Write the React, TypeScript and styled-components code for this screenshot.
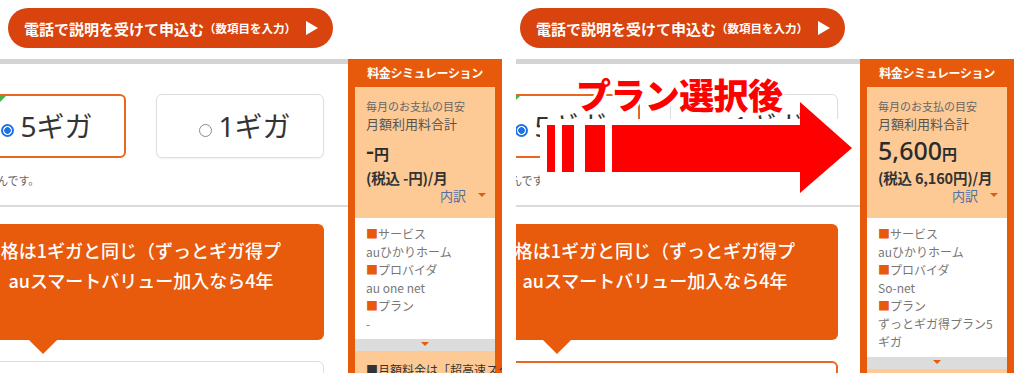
import React from 'react';
import styled, { createGlobalStyle } from 'styled-components';

const GlobalStyle = createGlobalStyle`
  body {
    margin: 0;
    background: #fff;
    font-family: "Noto Sans CJK JP", "Noto Sans", sans-serif;
  }
`;

const ORANGE = '#e75a0b';
const PEACH = '#fdca96';

const Page = styled.div`
  display: flex;
  width: 1024px;
  height: 373px;
  overflow: hidden;
`;

const Panel = styled.section`
  position: relative;
  width: 512px;
  height: 373px;
  flex: none;
  overflow: hidden;
`;

const TopRow = styled.div`
  height: 59px;
  padding: 8px 0 0 8px;
  box-sizing: border-box;
`;

const CallButton = styled.a`
  display: inline-flex;
  align-items: center;
  width: 325px;
  height: 40px;
  box-sizing: border-box;
  padding-left: 16px;
  border-radius: 20px;
  background: #d8430e;
  color: #fff;
  text-decoration: none;
  font-size: 15px;
  font-weight: 700;
  white-space: nowrap;
`;

const CallNote = styled.span`
  font-size: 11.5px;
  font-weight: 700;
`;

const PlayIcon = styled.svg`
  margin-left: 10px;
`;

const Body = styled.div`
  display: flex;
`;

const Main = styled.div<{ $clip: number }>`
  width: 348px;
  flex: none;
  overflow: hidden;
  clip-path: inset(0 0 0 ${(p) => p.$clip}px);
`;

// the page is scrolled sideways in the screenshot, so the column starts off-screen
const MainInner = styled.div<{ $shift: number }>`
  width: 390px;
  margin-left: ${(p) => p.$shift - 42}px;
`;

const GreyBar = styled.div`
  height: 5px;
  background: #d4d4d4;
`;

const Content = styled.div`
  padding-right: 24px;
`;

const OptionRow = styled.div`
  display: grid;
  grid-template-columns: 168px 168px;
  column-gap: 30px;
  margin-top: 30px;
`;

const OptionCard = styled.div<{ $selected: boolean }>`
  position: relative;
  height: 64px;
  box-sizing: border-box;
  padding-left: 10px;
  border-radius: 6px;
  border: ${(p) => (p.$selected ? `2px solid #e8661f` : '1px solid #dedede')};
  box-shadow: ${(p) => (p.$selected ? 'none' : '0 1px 2px rgba(0,0,0,0.06)')};
  display: flex;
  align-items: center;
  justify-content: center;
  overflow: hidden;

  &::before {
    content: '';
    display: ${(p) => (p.$selected ? 'block' : 'none')};
    position: absolute;
    top: 0;
    left: 0;
    border-top: 46px solid #46b34a;
    border-right: 46px solid transparent;
  }
`;

const Radio = styled.span<{ $checked: boolean }>`
  width: 13px;
  height: 13px;
  box-sizing: border-box;
  border-radius: 50%;
  flex: none;
  margin: 8px 6px 0 0;
  border: ${(p) => (p.$checked ? '2px solid #1a73e8' : '1px solid #8a8a8a')};
  background: ${(p) =>
    p.$checked ? 'radial-gradient(circle, #1a73e8 0 3px, #fff 3.6px)' : '#fff'};
`;

const OptionLabel = styled.span`
  font-family: "Noto Sans", "Noto Sans CJK JP", sans-serif;
  font-size: 28px;
  line-height: 1;
  color: #333;
`;

const Note = styled.div`
  margin-top: 14px;
  padding-left: 6px;
  font-size: 11px;
  line-height: 16px;
  color: #666;
`;

const Divider = styled.div`
  margin-top: 17px;
  height: 2px;
  background: #dadada;
`;

const Callout = styled.div`
  position: relative;
  margin-top: 17px;
  height: 116px;
  box-sizing: border-box;
  padding-top: 11px;
  border-radius: 6px;
  background: #e85a0c;
  color: #fff;
  text-align: center;
  font-size: 18px;
  font-weight: 500;
  line-height: 30px;
  white-space: nowrap;

  &::after {
    content: '';
    position: absolute;
    left: 71px;
    top: 100%;
    border-left: 14px solid transparent;
    border-right: 14px solid transparent;
    border-top: 14px solid #e85a0c;
  }
`;

const NextCard = styled.div<{ $selected: boolean }>`
  margin-top: 21px;
  height: 40px;
  border-radius: 6px;
  border: ${(p) => (p.$selected ? '2px solid #e8661f' : '1px solid #dedede')};
`;

const Sidebar = styled.aside`
  width: 154px;
  height: 314px;
  flex: none;
  box-sizing: border-box;
  padding: 0 7px;
  background: ${ORANGE};
  overflow: hidden;
`;

const SideTitle = styled.div`
  height: 28px;
  line-height: 28px;
  text-align: center;
  color: #fff;
  font-size: 12px;
  font-weight: 700;
  letter-spacing: -0.4px;
`;

const Summary = styled.div`
  background: ${PEACH};
  padding: 11px 9px 14px 11px;
  color: #444;
`;

const SmallLine = styled.div`
  font-size: 11px;
  line-height: 17px;
  color: #666;
`;

const TotalLabel = styled.div`
  font-size: 13px;
  line-height: 18px;
  color: #555;
`;

const PriceRow = styled.div`
  margin-top: 2px;
  height: 30px;
  line-height: 30px;
  font-family: "Noto Sans", "Noto Sans CJK JP", sans-serif;
  font-size: 25px;
  font-weight: 500;
  color: #2b2b2b;
`;

const Yen = styled.span`
  font-family: "Noto Sans CJK JP", sans-serif;
  font-size: 15px;
  font-weight: 700;
`;

const TaxLine = styled.div`
  margin-top: 3px;
  font-size: 14.5px;
  font-weight: 700;
  line-height: 20px;
  letter-spacing: -0.2px;
  color: #333;
  white-space: nowrap;
`;

const DetailToggle = styled.div`
  display: flex;
  justify-content: flex-end;
  align-items: center;
  gap: 12px;
  font-size: 13px;
  line-height: 16px;
  color: #4f6fa4;
`;

const DownTri = styled.span`
  width: 0;
  height: 0;
  border-left: 4px solid transparent;
  border-right: 4px solid transparent;
  border-top: 4px solid ${ORANGE};
  margin-top: -2px;
`;

const Breakdown = styled.div`
  background: #fff;
  padding: 7px 10px 6px 11px;
  font-size: 12px;
  line-height: 18px;
  color: #777;
`;

const Square = styled.span`
  color: ${ORANGE};
`;

const FoldBar = styled.div`
  height: 12px;
  background: #dcdcdc;
  display: flex;
  justify-content: center;
  align-items: center;
`;

const Footnote = styled.div`
  background: ${PEACH};
  padding: 10px 10px 8px 11px;
  font-size: 12px;
  line-height: 18px;
  color: #333;
  white-space: nowrap;
`;

const Annotation = styled.svg`
  position: absolute;
  left: 28px;
  top: 98px;
`;

const Caption = styled.div`
  position: absolute;
  left: 64px;
  top: 74px;
  font-size: 35px;
  font-weight: 900;
  line-height: 40px;
  letter-spacing: -0.6px;
  color: #ff0000;
  white-space: nowrap;
  text-shadow: 2px 0 0 #fff, -2px 0 0 #fff, 0 2px 0 #fff, 0 -2px 0 #fff,
    2px 2px 0 #fff, -2px -2px 0 #fff, 2px -2px 0 #fff, -2px 2px 0 #fff;
`;

type PanelData = {
  clip: number;
  shift: number;
  price: string;
  tax: string;
  provider: string;
  plan: string;
  nextSelected: boolean;
  annotate: boolean;
};

const panels: PanelData[] = [
  { clip: 0, shift: 0, price: '-', tax: '-', provider: 'au one net', plan: '-', nextSelected: false, annotate: false },
  { clip: 4, shift: 2, price: '5,600', tax: '6,160', provider: 'So-net', plan: 'ずっとギガ得プラン5ギガ', nextSelected: true, annotate: true },
];

const SimPanel = ({ data }: { data: PanelData }) => (
  <Panel>
    <TopRow>
      <CallButton>
        電話で説明を受けて申込む<CallNote>（数項目を入力）</CallNote>
        <PlayIcon width="12" height="14" viewBox="0 0 12 14">
          <path d="M0 0 L12 7 L0 14 Z" fill="#fff" />
        </PlayIcon>
      </CallButton>
    </TopRow>
    <Body>
      <Main $clip={data.clip}>
        <MainInner $shift={data.shift}>
          <GreyBar />
          <Content>
            <OptionRow>
              <OptionCard $selected>
                <Radio $checked />
                <OptionLabel>5ギガ</OptionLabel>
              </OptionCard>
              <OptionCard $selected={false}>
                <Radio $checked={false} />
                <OptionLabel>1ギガ</OptionLabel>
              </OptionCard>
            </OptionRow>
            <Note>同じなんです。</Note>
          </Content>
          <Divider />
          <Content>
            <Callout>
              格は1ギガと同じ（ずっとギガ得プ
              <br />
              auスマートバリュー加入なら4年
            </Callout>
            <NextCard $selected={data.nextSelected} />
          </Content>
        </MainInner>
      </Main>
      <Sidebar>
        <SideTitle>料金シミュレーション</SideTitle>
        <Summary>
          <SmallLine>毎月のお支払の目安</SmallLine>
          <TotalLabel>月額利用料合計</TotalLabel>
          <PriceRow>
            {data.price}
            <Yen>円</Yen>
          </PriceRow>
          <TaxLine>(税込 {data.tax}円)/月</TaxLine>
          <DetailToggle>
            内訳
            <DownTri />
          </DetailToggle>
        </Summary>
        <Breakdown>
          <div><Square>■</Square>サービス</div>
          <div>auひかりホーム</div>
          <div><Square>■</Square>プロバイダ</div>
          <div>{data.provider}</div>
          <div><Square>■</Square>プラン</div>
          <div>{data.plan}</div>
        </Breakdown>
        <FoldBar>
          <DownTri />
        </FoldBar>
        <Footnote>■月額料金は「超高速スタート割」</Footnote>
      </Sidebar>
    </Body>
    {data.annotate && (
      <>
        <Annotation width="318" height="100" viewBox="0 0 318 100">
          <rect x="0" y="21" width="312" height="78" fill="#fff" />
          <rect x="7" y="27" width="8" height="47" fill="#ff0000" />
          <rect x="22" y="27" width="12" height="47" fill="#ff0000" />
          <rect x="45" y="27" width="20" height="47" fill="#ff0000" />
          <path d="M72 27 H260 V4 L312 50 L260 95 V74 H72 Z" fill="#ff0000" />
        </Annotation>
        <Caption>プラン選択後</Caption>
      </>
    )}
  </Panel>
);

export default function App() {
  return (
    <>
      <GlobalStyle />
      <Page>
        {panels.map((p, i) => (
          <SimPanel key={i} data={p} />
        ))}
      </Page>
    </>
  );
}
